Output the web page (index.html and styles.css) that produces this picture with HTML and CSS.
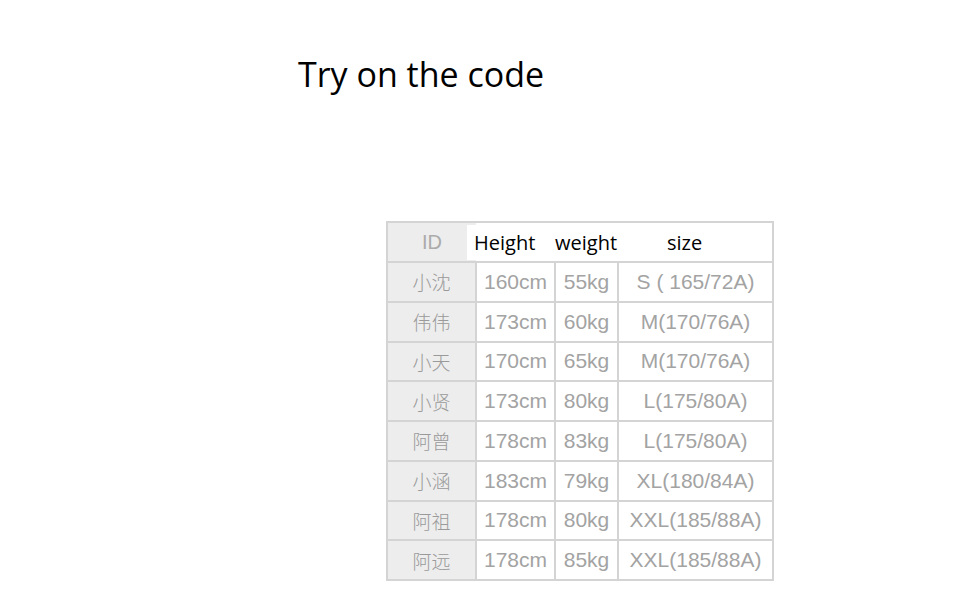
FILE: index.html
```html
<!DOCTYPE html>
<html lang="zh-CN">
<head>
    <meta charset="UTF-8">
    <title>Try on the code</title>
    <link rel="stylesheet" href="styles.css">
</head>
<body>
    <div class="page">
        <h1>Try on the code</h1>

        <table class="size-table">
            <tr class="head">
                <th class="id">ID</th>
                <th><span class="patch">Height</span></th>
                <th class="w">weight</th>
                <th class="s">size</th>
            </tr>
            <tr><td class="id">小沈</td><td>160cm</td><td>55kg</td><td>S ( 165/72A)</td></tr>
            <tr><td class="id">伟伟</td><td>173cm</td><td>60kg</td><td>M(170/76A)</td></tr>
            <tr><td class="id">小天</td><td>170cm</td><td>65kg</td><td>M(170/76A)</td></tr>
            <tr><td class="id">小贤</td><td>173cm</td><td>80kg</td><td>L(175/80A)</td></tr>
            <tr><td class="id">阿曾</td><td>178cm</td><td>83kg</td><td>L(175/80A)</td></tr>
            <tr><td class="id">小涵</td><td>183cm</td><td>79kg</td><td>XL(180/84A)</td></tr>
            <tr><td class="id">阿祖</td><td>178cm</td><td>80kg</td><td>XXL(185/88A)</td></tr>
            <tr><td class="id">阿远</td><td>178cm</td><td>85kg</td><td>XXL(185/88A)</td></tr>
        </table>
    </div>
</body>
</html>
```

FILE: styles.css
```css
body {
    margin: 0;
    background-color: #fff;
    color: #000;
    font-family: 'Open Sans', 'Noto Sans CJK SC', sans-serif;
}
.page {
    padding: 50px 0 0 298px;
}
h1 {
    margin: 0;
    font-size: 34px;
    font-weight: normal;
    line-height: 48px;
}
.size-table {
    margin: 123px 0 0 88px;
    border-collapse: collapse;
    font-family: 'Liberation Sans', 'Noto Sans CJK SC', sans-serif;
    font-size: 21px;
    color: #a3a3a3;
}
.size-table td, .size-table th {
    border: 2px solid #d4d4d4;
    height: 37.75px;
    padding: 0;
    text-align: center;
    font-weight: normal;
}
.size-table td:nth-child(1) { width: 87px; }
.size-table td:nth-child(2) { width: 77px; }
.size-table td:nth-child(3) { width: 61px; }
.size-table td:nth-child(4) { width: 153px; }
.size-table .id {
    background-color: #ededed;
    font-family: 'Noto Sans CJK SC', sans-serif;
    font-size: 19px;
    font-weight: 300;
    color: #9a9a9a;
}
.size-table .head th {
    height: 38px;
    font-family: 'Open Sans', sans-serif;
    font-size: 20px;
    color: #000;
    border-left: none;
    border-right: none;
}
.size-table .head th.id {
    border-left: 2px solid #d4d4d4;
    color: #ababab;
    font-family: 'Liberation Sans', sans-serif;
    font-size: 20px;
}
.size-table .head th.w {
    text-align: left;
    padding-left: 0;
}
.size-table .head th.s {
    border-right: 2px solid #d4d4d4;
    text-align: left;
    padding-left: 49px;
}
.patch {
    display: block;
    margin-left: -9px;
    padding: 4px 0 4px 7px;
    text-align: left;
    background-color: #fff;
}
```
